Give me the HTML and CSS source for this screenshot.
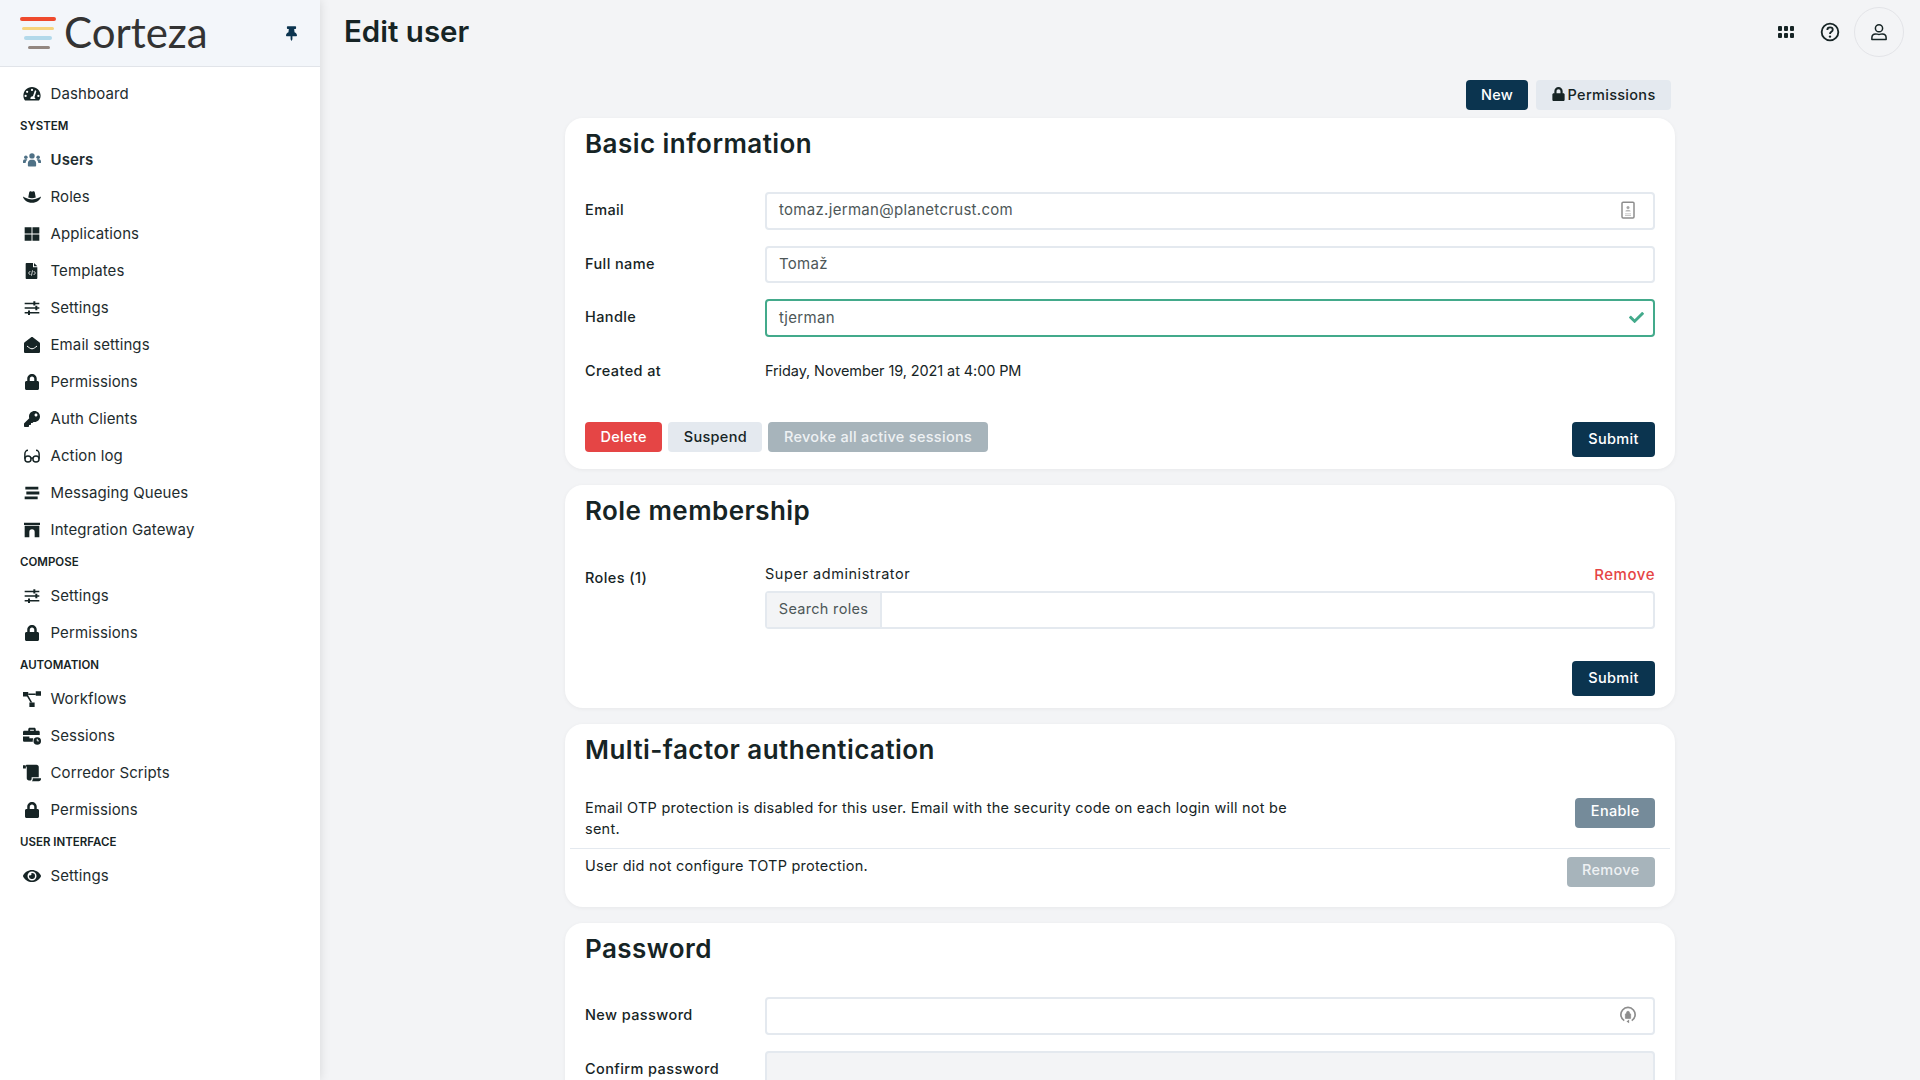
FILE: index.html
```html
<!DOCTYPE html>
<html lang="en">
<head>
    <meta charset="UTF-8">
    <title>Edit user</title>
    <link rel="stylesheet" href="styles.css">
</head>
<body>
    <svg class="sprite" xmlns="http://www.w3.org/2000/svg">
        <symbol id="i-lock" viewBox="0 0 448 512"><path d="M400 224h-24v-72C376 68.200 307.800 0 224 0S72 68.200 72 152v72H48c-26.500 0-48 21.500-48 48v192c0 26.500 21.500 48 48 48h352c26.500 0 48-21.500 48-48V272c0-26.500-21.500-48-48-48zm-104 0H152v-72c0-39.700 32.300-72 72-72s72 32.300 72 72v72z"/></symbol>
        <symbol id="i-key" viewBox="0 0 512 512"><path d="M512 176C512 273.200 433.200 352 336 352c-11.200 0-22.200-1.100-32.800-3.100l-24 27A24 24 0 0 1 261.200 384H224v40c0 13.300-10.700 24-24 24h-40v40c0 13.300-10.700 24-24 24H24c-13.300 0-24-10.700-24-24v-78.100c0-6.400 2.500-12.500 7-17l161.800-161.800C163.100 213.800 160 195.300 160 176 160 78.800 238.800 0 336 0 433.500 0 512 78.500 512 176zM336 128c0 26.500 21.500 48 48 48s48-21.500 48-48-21.500-48-48-48-48 21.500-48 48z"/></symbol>
        <symbol id="i-pin" viewBox="0 0 384 512"><path d="M298 214.300L285.800 96H328c13.300 0 24-10.700 24-24V24c0-13.300-10.700-24-24-24H56C42.700 0 32 10.700 32 24v48c0 13.300 10.700 24 24 24h42.200L86 214.300C37.500 236.800 0 277.300 0 328c0 13.300 10.700 24 24 24h136v104c0 1.200.3 2.500.8 3.600l24 48c2.900 5.900 11.400 5.900 14.300 0l24-48c.6-1.100.9-2.400.9-3.600V352h136c13.300 0 24-10.700 24-24 0-51.200-38-91.400-86-113.700z"/></symbol>
        <symbol id="i-check" viewBox="0 0 512 512"><path d="M173.900 439.400l-166.400-166.400c-10-10-10-26.200 0-36.200l36.200-36.200c10-10 26.200-10 36.200 0L192 312.700 432.100 72.600c10-10 26.200-10 36.200 0l36.200 36.200c10 10 10 26.200 0 36.200l-294.400 294.400c-10 10-26.200 10-36.200 0z"/></symbol>
        <symbol id="i-eye" viewBox="0 0 576 512"><path d="M572.500 241.400C518.300 135.600 410.900 64 288 64S57.700 135.600 3.500 241.400a32.400 32.400 0 0 0 0 29.200C57.700 376.400 165.100 448 288 448s230.300-71.600 284.500-177.400a32.400 32.400 0 0 0 0-29.200zM288 400a144 144 0 1 1 144-144 143.900 143.900 0 0 1-144 144zm0-240a95.300 95.300 0 0 0-25.300 3.800 47.900 47.900 0 0 1-66.900 66.900A95.800 95.800 0 1 0 288 160z"/></symbol>
        <symbol id="i-gauge" viewBox="0 0 24 24"><path fill-rule="evenodd" d="M12 2.500C5.600 2.500.5 7.700.5 14c0 2.200.6 4.300 1.700 6 .3.500.8.700 1.300.7h17c.5 0 1-.2 1.300-.7 1.100-1.700 1.700-3.800 1.700-6 0-6.300-5.100-11.500-11.500-11.500zM12 5a1.500 1.500 0 1 1 0 3 1.500 1.500 0 0 1 0-3zM5.500 7.500a1.500 1.500 0 1 1 0 3 1.500 1.500 0 0 1 0-3zM3.500 13a1.500 1.500 0 1 1 0 3 1.500 1.500 0 0 1 0-3zm17 0a1.500 1.500 0 1 1 0 3 1.500 1.500 0 0 1 0-3zM17 7.200c.6.200.9.800.7 1.400l-2.500 7.700c.8.600 1.300 1.500 1.300 2.400H10c-.5-1.600.6-3.700 3.200-3.600l2.400-7.200c.2-.6.800-.9 1.400-.7z"/></symbol>
        <symbol id="i-users" viewBox="0 0 24 24"><circle cx="12" cy="6.500" r="3.600"/><circle cx="3.800" cy="8.300" r="2.400"/><circle cx="20.200" cy="8.300" r="2.400"/><path d="M6.500 19.500v-3.200c0-3 2.200-4.800 4-4.800h3c1.800 0 4 1.800 4 4.800v3.200c0 .6-.5 1.100-1 1.100h-5H7.500c-.5 0-1-.5-1-1.100zM0 15.500v-1.600c0-1.800 1.300-3 2.800-3h1.900c.4 0 .8.100 1.100.3-1.100 1-2.200 2.500-2.300 4.800H1c-.6 0-1-.2-1-.5zm24 0v-1.600c0-1.800-1.300-3-2.800-3h-1.900c-.4 0-.8.100-1.100.3 1.100 1 2.200 2.500 2.300 4.800H23c.6 0 1-.2 1-.5z"/></symbol>
        <symbol id="i-hat" viewBox="0 0 24 24"><path d="M7 12.500l1.300-7c.2-1 1.200-1.600 2.100-1.200l1.600.7 1.600-.7c.9-.4 1.900.2 2.100 1.200l1.300 7c-1.800.7-3.300 1-5 1s-3.200-.3-5-1z"/><path d="M0 11.500c1.200 0 1.800.8 4 1.900 2.500 1.200 5.200 1.900 8 1.900s5.500-.7 8-1.900c2.200-1.100 2.800-1.900 4-1.900-1 4.400-5.600 8-12 8S1 15.900 0 11.500z"/></symbol>
        <symbol id="i-grid" viewBox="0 0 24 24"><path d="M1 2h10.300v9.300H1zM12.700 2H23v9.300H12.700zM1 12.700h10.300V22H1zM12.700 12.700H23V22H12.700z"/></symbol>
        <symbol id="i-file" viewBox="0 0 24 24"><path d="M4 0h9.500v6.500H20V22.500c0 .8-.7 1.500-1.500 1.500h-14.500c-.8 0-1.500-.7-1.500-1.500V1.500C2.500.7 3.200 0 4 0zM15 0l5 5h-5z"/><path d="M9.500 12l-2.700 3 2.700 3M14.500 12l2.700 3-2.700 3M12.800 11l-1.600 8" fill="none" stroke="#fff" stroke-width="1.200"/></symbol>
        <symbol id="i-sliders" viewBox="0 0 24 24"><path d="M1 4h22v2.200H1zM1 11h22v2.200H1zM1 18h22v2.200H1z"/><path d="M14 1.800h3v6.600h-3zM17 8.800h3v6.600h-3zM6 15.800h3v6.600H6z"/></symbol>
        <symbol id="i-mail" viewBox="0 0 24 24"><path d="M12 0c.6 0 1.200.2 1.700.6L23 7.700c.6.500 1 1.200 1 2V22c0 1.100-.9 2-2 2H2c-1.100 0-2-.9-2-2V9.700c0-.8.400-1.500 1-2L10.300.6C10.800.2 11.400 0 12 0z"/><path d="M4.500 13.500c2.500 2 5 4.200 7.500 4.200s5-2.200 7.500-4.200" fill="none" stroke="#fff" stroke-width="1.500"/></symbol>
        <symbol id="i-glasses" viewBox="0 0 24 24"><g fill="none" stroke="currentColor" stroke-width="2.200"><circle cx="6" cy="16.500" r="4.600"/><circle cx="18" cy="16.500" r="4.600"/><path d="M1.300 16V9c0-3 1.800-5.500 4.700-5.500M22.700 16V9c0-3-1.800-5.500-4.700-5.500M10.500 15.500c1-.8 2-.8 3 0"/></g></symbol>
        <symbol id="i-stream" viewBox="0 0 24 24"><path d="M2 2.500h19.500v4.300H2zM3.500 9.800H23v4.300H3.500zM1 17.200h19.500v4.300H1z"/></symbol>
        <symbol id="i-arch" viewBox="0 0 24 24"><path d="M0 1h24v3.500H0zM1 5.500h22V23h-7v-8a4 4 0 0 0-8 0v8H1z"/></symbol>
        <symbol id="i-flow" viewBox="0 0 24 24"><path d="M0 2.500h7v6H0zM17 1.500h7v6h-7zM8.500 16.500h7v6h-7z"/><path d="M7 4.500h10v2H7zM5 8h2.400l5 8.500H10z"/></symbol>
        <symbol id="i-case" viewBox="0 0 24 24"><path d="M7 5V3c0-1.100.9-2 2-2h6c1.100 0 2 .9 2 2v2h3.500c1 0 1.800.8 1.800 1.800v4H0V6.800C0 5.800.8 5 1.800 5zm2.500-1.500V5h5V3.500zM0 12.500h8.500V15h5.200c-.4 1-.7 2-.7 3.300 0 .5 0 1 .1 1.500H1.800C.8 19.800 0 19 0 18z"/><circle cx="19" cy="18.500" r="5"/><path d="M19 15.800v2.700h2.200" fill="none" stroke="#fff" stroke-width="1.200"/></symbol>
        <symbol id="i-scroll" viewBox="0 0 24 24"><path d="M4.500 1H18c1.700 0 3 1.300 3 3v13.500h-9.500v2.500c0 1.100-.9 2-2 2H8c-1.700 0-3-1.300-3-3V5c0-1.500-.5-2-1.500-2.500zM0 1.500h2.500c.8 0 1.300.5 1.300 1.300V6H.5C.2 6 0 5.800 0 5.500z"/><path d="M13 19h11v1c0 1.700-1.300 3-3 3H11.800c.8-.6 1.200-1.700 1.200-3z"/></symbol>
    </svg>

    <div class="app">
        <aside class="sidebar">
            <div class="brand">
                <div class="logo">
                    <span class="logo-bars"><i></i><i></i><i></i><i></i></span>
                    <span class="logo-text">Corteza</span>
                </div>
                <svg class="pin"><use href="#i-pin"/></svg>
            </div>
            <nav class="nav">
                <a class="nav-item"><span class="nav-icon"><svg class="ic-w"><use href="#i-gauge"/></svg></span>Dashboard</a>
                <div class="nav-head">System</div>
                <a class="nav-item active"><span class="nav-icon"><svg class="ic-w"><use href="#i-users"/></svg></span>Users</a>
                <a class="nav-item"><span class="nav-icon"><svg class="ic-w"><use href="#i-hat"/></svg></span>Roles</a>
                <a class="nav-item"><span class="nav-icon"><svg class="ic-s"><use href="#i-grid"/></svg></span>Applications</a>
                <a class="nav-item"><span class="nav-icon"><svg class="ic-s"><use href="#i-file"/></svg></span>Templates</a>
                <a class="nav-item"><span class="nav-icon"><svg class="ic-s"><use href="#i-sliders"/></svg></span>Settings</a>
                <a class="nav-item"><span class="nav-icon"><svg class="ic-s"><use href="#i-mail"/></svg></span>Email settings</a>
                <a class="nav-item"><span class="nav-icon"><svg class="ic-s"><use href="#i-lock"/></svg></span>Permissions</a>
                <a class="nav-item"><span class="nav-icon"><svg class="ic-s"><use href="#i-key"/></svg></span>Auth Clients</a>
                <a class="nav-item"><span class="nav-icon"><svg class="ic-s"><use href="#i-glasses"/></svg></span>Action log</a>
                <a class="nav-item"><span class="nav-icon"><svg class="ic-s"><use href="#i-stream"/></svg></span>Messaging Queues</a>
                <a class="nav-item"><span class="nav-icon"><svg class="ic-s"><use href="#i-arch"/></svg></span>Integration Gateway</a>
                <div class="nav-head">Compose</div>
                <a class="nav-item"><span class="nav-icon"><svg class="ic-s"><use href="#i-sliders"/></svg></span>Settings</a>
                <a class="nav-item"><span class="nav-icon"><svg class="ic-s"><use href="#i-lock"/></svg></span>Permissions</a>
                <div class="nav-head">Automation</div>
                <a class="nav-item"><span class="nav-icon"><svg class="ic-w"><use href="#i-flow"/></svg></span>Workflows</a>
                <a class="nav-item"><span class="nav-icon"><svg class="ic-w"><use href="#i-case"/></svg></span>Sessions</a>
                <a class="nav-item"><span class="nav-icon"><svg class="ic-w"><use href="#i-scroll"/></svg></span>Corredor Scripts</a>
                <a class="nav-item"><span class="nav-icon"><svg class="ic-s"><use href="#i-lock"/></svg></span>Permissions</a>
                <div class="nav-head">User interface</div>
                <a class="nav-item"><span class="nav-icon"><svg class="ic-w"><use href="#i-eye"/></svg></span>Settings</a>
            </nav>
        </aside>

        <main class="main">
            <header class="topbar">
                <h1>Edit user</h1>
                <div class="top-tools">
                    <span class="apps-icon"><i></i><i></i><i></i><i></i><i></i><i></i></span>
                    <svg class="help-icon" viewBox="0 0 24 24"><circle cx="12" cy="12" r="10" fill="none" stroke="currentColor" stroke-width="2.200"/><path d="M8.800 9.500c0-1.800 1.400-3 3.300-3s3.200 1.200 3.200 2.800c0 2.500-3.300 2.500-3.300 5" fill="none" stroke="currentColor" stroke-width="2.200"/><circle cx="12" cy="17.500" r="1.400" fill="currentColor"/></svg>
                    <span class="avatar">
                        <svg class="tool-icon" viewBox="0 0 24 24"><circle cx="12" cy="7" r="4.800" fill="none" stroke="currentColor" stroke-width="2"/><path d="M2.500 22v-2.500c0-3 2.200-5 5-5 1.800 0 2.500.7 4.500.7s2.700-.7 4.500-.7c2.800 0 5 2 5 5V22z" fill="none" stroke="currentColor" stroke-width="2" stroke-linejoin="round"/></svg>
                    </span>
                </div>
            </header>

            <div class="content">
                <div class="toolbar">
                    <a class="btn btn-primary btn-new">New</a>
                    <a class="btn btn-light"><svg class="btn-icon"><use href="#i-lock"/></svg>Permissions</a>
                </div>

                <section class="card">
                    <h2>Basic information</h2>
                    <div class="row">
                        <label>Email</label>
                        <div class="field">tomaz.jerman@planetcrust.com
                            <svg class="field-icon" viewBox="0 0 24 24"><rect x="4" y="1.500" width="16" height="21" rx="1.500" fill="none" stroke="#8d8d8d" stroke-width="2"/><circle cx="12" cy="8.500" r="2" fill="#a5a5a5"/><path d="M8.500 14c0-1.500 1.500-2.500 3.500-2.500s3.500 1 3.500 2.500zM8 16.500h8v1.200H8zM8 19h8v1H8z" fill="#b8b8b8"/></svg>
                        </div>
                    </div>
                    <div class="row">
                        <label>Full name</label>
                        <div class="field">Tomaž</div>
                    </div>
                    <div class="row">
                        <label>Handle</label>
                        <div class="field field-ok">tjerman<svg class="check"><use href="#i-check"/></svg></div>
                    </div>
                    <div class="row">
                        <label>Created at</label>
                        <div class="plain">Friday, November 19, 2021 at 4:00 PM</div>
                    </div>
                    <div class="card-foot">
                        <div class="btn-group">
                            <a class="btn btn-danger">Delete</a>
                            <a class="btn btn-light">Suspend</a>
                            <a class="btn btn-muted">Revoke all active sessions</a>
                        </div>
                        <a class="btn btn-primary btn-submit">Submit</a>
                    </div>
                </section>

                <section class="card">
                    <h2>Role membership</h2>
                    <div class="row role-row">
                        <label>Roles (1)</label>
                        <div>
                            <div class="role-line"><span>Super administrator</span><a class="link-danger">Remove</a></div>
                            <div class="input-group"><span class="prepend">Search roles</span><span class="group-input"></span></div>
                        </div>
                    </div>
                    <div class="card-foot foot-end">
                        <a class="btn btn-primary btn-submit">Submit</a>
                    </div>
                </section>

                <section class="card card-mfa">
                    <h2>Multi-factor authentication</h2>
                    <div class="mfa-row">
                        <p>Email OTP protection is disabled for this user. Email with the security code on each login will not be sent.</p>
                        <a class="btn btn-secondary">Enable</a>
                    </div>
                    <hr>
                    <div class="mfa-row">
                        <p>User did not configure TOTP protection.</p>
                        <a class="btn btn-muted">Remove</a>
                    </div>
                </section>

                <section class="card">
                    <h2>Password</h2>
                    <div class="row">
                        <label>New password</label>
                        <div class="field">
                            <svg class="field-icon" viewBox="0 0 24 24"><path d="M7 19.500a9.500 9.500 0 1 1 10 0" fill="none" stroke="#8d8d8d" stroke-width="2.200"/><path d="M8.500 10.500h7v6h-7zM10 10.500V9a2 2 0 0 1 4 0v1.500" fill="#8d8d8d" stroke="#8d8d8d"/><path d="M10 20.500l3.500-2.500v5z" fill="#8d8d8d"/></svg>
                        </div>
                    </div>
                    <div class="row">
                        <label>Confirm password</label>
                        <div class="field field-off"></div>
                    </div>
                </section>
            </div>
        </main>
    </div>
</body>
</html>
```

FILE: styles.css
```css
* {
    margin: 0;
    padding: 0;
    box-sizing: border-box;
}
html, body {
    height: 100%;
    overflow: hidden;
}
body {
    background: #f3f4f6;
    color: #162425;
    font-family: "Inter", "Liberation Sans", sans-serif;
    font-size: 14.5px;
    letter-spacing: 0.3px;
}
.sprite {
    display: none;
}
.app {
    display: flex;
    height: 100vh;
}

/* sidebar */
.sidebar {
    width: 320px;
    flex: none;
    background: white;
    box-shadow: 0 0 10px rgba(0, 0, 0, 0.12);
    z-index: 1;
}
.brand {
    height: 67px;
    display: flex;
    align-items: center;
    justify-content: space-between;
    padding: 0 23px 0 20px;
    background: #f3f6fa;
    border-bottom: 1px solid #e1e4e9;
}
.logo {
    display: flex;
    align-items: center;
    gap: 8px;
}
.logo-bars {
    display: flex;
    flex-direction: column;
    align-items: center;
    gap: 6px;
    width: 36px;
}
.logo-bars i {
    display: block;
    height: 3.5px;
    border-radius: 2px;
}
.logo-bars i:nth-child(1) { width: 36px; background: #ef4a2d; }
.logo-bars i:nth-child(2) { width: 32px; background: #f6d47c; }
.logo-bars i:nth-child(3) { width: 28px; background: #b2d9ea; }
.logo-bars i:nth-child(4) { width: 22px; margin-left: 2px; background: #928781; }
.logo-text {
    font-family: "Lato", sans-serif;
    font-weight: 400;
    font-size: 42px;
    letter-spacing: 0;
    line-height: 1;
    color: #333;
    padding-bottom: 2px;
}
.pin {
    width: 11px;
    height: 15px;
    fill: #0b344f;
}
.nav {
    padding-top: 8px;
}
.nav-item {
    height: 37px;
    display: flex;
    align-items: center;
    padding-left: 20px;
    color: #1e2c2e;
    font-size: 15px;
    letter-spacing: 0.1px;
}
.nav-item.active {
    font-weight: 600;
}
.nav-item.active svg {
    fill: #4f7186;
}
.nav-icon {
    width: 24px;
    height: 18px;
    margin-right: 6.5px;
    display: flex;
    align-items: center;
    justify-content: center;
}
.nav-icon svg {
    fill: #162425;
    color: #162425;
}
.ic-s {
    width: 16px;
    height: 16px;
}
.ic-w {
    width: 18px;
    height: 18px;
}
.nav-head {
    height: 29px;
    display: flex;
    align-items: center;
    padding: 0 0 2px 20px;
    font-size: 11.5px;
    font-weight: 600;
    letter-spacing: 0;
    text-transform: uppercase;
}

/* main */
.main {
    flex: 1;
    min-width: 0;
}
.topbar {
    height: 64px;
    display: flex;
    align-items: center;
    justify-content: space-between;
    padding: 0 16px 0 24px;
}
h1 {
    font-size: 29.500px;
    font-weight: 600;
    letter-spacing: 0;
    padding-bottom: 2px;
}
.top-tools {
    display: flex;
    align-items: center;
}
.apps-icon {
    display: grid;
    grid-template-columns: repeat(3, 4.500px);
    gap: 1.500px;
    margin-right: 26px;
}
.apps-icon i {
    height: 5px;
    border-radius: 1px;
    background: #162425;
}
.help-icon {
    width: 20px;
    height: 20px;
    margin-right: 14px;
    color: #162425;
}
.tool-icon {
    width: 18px;
    height: 18px;
    color: #162425;
}
.avatar {
    width: 50px;
    height: 50px;
    border: 1px solid #e3e4e8;
    border-radius: 50%;
    display: flex;
    align-items: center;
    justify-content: center;
}
.content {
    width: 1110px;
    margin: 16px auto 0;
}
.toolbar {
    display: flex;
    justify-content: flex-end;
    gap: 8px;
    padding-right: 4px;
    margin-bottom: 8px;
}

/* buttons */
.btn {
    height: 30px;
    display: inline-flex;
    align-items: center;
    justify-content: center;
    padding: 0 15.5px 2px;
    border-radius: 4px;
    font-weight: 500;
    letter-spacing: 0.3px;
    white-space: nowrap;
}
.btn-primary { background: #0b344f; color: white; }
.btn-light { background: #e4e9ef; color: #162425; }
.btn-danger { background: #e54545; color: white; }
.btn-muted { background: #a7b4bb; color: #eef1f3; }
.btn-secondary { background: #758b9a; color: white; }
.btn-new {
    width: 62px;
    padding: 0 0 2px;
}
.btn-submit {
    height: 35px;
    width: 83px;
}
.btn-icon {
    width: 13px;
    height: 14px;
    margin-right: 3px;
    fill: #162425;
}
.btn-group {
    display: flex;
    gap: 6px;
}

/* cards */
.card {
    background: white;
    border-radius: 18px;
    box-shadow: 0 1px 4px rgba(0, 0, 0, 0.05);
    padding: 0 20px 12px;
    margin-bottom: 16px;
}
h2 {
    height: 74px;
    padding-top: 9px;
    line-height: 34px;
    font-size: 26px;
    font-weight: 600;
    letter-spacing: 0.45px;
}
.row {
    display: grid;
    grid-template-columns: 180px 1fr;
    align-items: center;
    min-height: 37.500px;
    margin-bottom: 16px;
}
label {
    font-weight: 500;
    letter-spacing: 0.4px;
    padding-bottom: 2px;
}
.plain {
    letter-spacing: -0.1px;
    padding-bottom: 2px;
}
.field {
    height: 37.500px;
    display: flex;
    align-items: center;
    justify-content: space-between;
    padding: 0 12px 2px;
    border: 2px solid #e4e9ef;
    border-radius: 4px;
    color: #4d5758;
    font-size: 15px;
}
.field-ok {
    border-color: #43aa8b;
    padding-bottom: 1px;
}
.field-off {
    background: #f3f4f6;
}
.field-icon {
    width: 18px;
    height: 18px;
    margin-left: auto;
    margin-right: 4px;
}
.check {
    width: 15px;
    height: 15px;
    margin-right: -3px;
    fill: #43aa8b;
}
.card-foot {
    display: flex;
    justify-content: space-between;
    align-items: flex-start;
    margin-top: 32px;
}
.foot-end {
    justify-content: flex-end;
}
.role-row {
    align-items: start;
    margin-bottom: 0;
}
.role-row label {
    padding-top: 10px;
}
.role-line {
    height: 32px;
    display: flex;
    align-items: center;
    justify-content: space-between;
    padding-bottom: 3px;
    letter-spacing: 0.55px;
}
.link-danger {
    color: #e54545;
    font-weight: 500;
    font-size: 15px;
    padding-top: 2px;
}
.input-group {
    display: flex;
    height: 38px;
    border: 2px solid #e4e9ef;
    border-radius: 4px;
}
.prepend {
    width: 115px;
    display: flex;
    align-items: center;
    justify-content: center;
    padding-bottom: 4px;
    background: #f3f4f6;
    border-right: 2px solid #e4e9ef;
    color: #4d5758;
}
.group-input {
    flex: 1;
}
.card-mfa {
    padding-bottom: 20px;
}
.mfa-row {
    display: flex;
    justify-content: space-between;
    align-items: flex-start;
    line-height: 20.5px;
}
.mfa-row p {
    width: 710px;
    letter-spacing: 0.24px;
}
.mfa-row .btn {
    padding-bottom: 4px;
}
.card hr {
    border: none;
    border-top: 1px solid #e4e9ef;
    margin: 9px -15px 8px;
}
.card hr + .mfa-row p {
    margin-top: -1px;
}
```
